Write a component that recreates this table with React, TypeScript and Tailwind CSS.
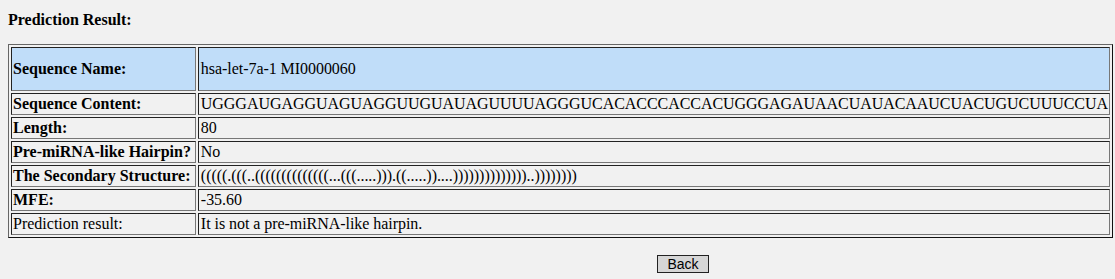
const rows: { label: string; value: string; bold: boolean }[] = [
  { label: 'Sequence Content:', value: 'UGGGAUGAGGUAGUAGGUUGUAUAGUUUUAGGGUCACACCCACCACUGGGAGAUAACUAUACAAUCUACUGUCUUUCCUA', bold: true },
  { label: 'Length:', value: '80', bold: true },
  { label: 'Pre-miRNA-like Hairpin?', value: 'No', bold: true },
  { label: 'The Secondary Structure:', value: '(((((.(((..((((((((((((((...(((.....))).((.....))....))))))))))))))..))))))))', bold: true },
  { label: 'MFE:', value: '-35.60', bold: true },
  { label: 'Prediction result:', value: 'It is not a pre-miRNA-like hairpin.', bold: false },
]

const cell = 'border border-t-[#222] border-l-[#222] border-b-[#777] border-r-[#777] py-px text-left align-middle'
const labelCell = cell + ' w-[185px] pl-px pr-[3px] whitespace-nowrap'
const valueCell = cell + ' pl-[2px] pr-px whitespace-nowrap tracking-[-0.05px]'

export default function App() {
  return (
    <div className="min-h-[279px] bg-[#f1f1f1] px-2 pt-[11px] text-black" style={{ fontFamily: '"Liberation Serif", "Times New Roman", serif' }}>
      <div className="text-[16px] font-bold leading-[17px]">Prediction Result:</div>

      <table className="mt-4 w-[1105px] border-separate border-spacing-[2px] border border-t-[#666] border-l-[#666] border-b-[#111] border-r-[#111] text-[16px] leading-[18px]">
        <tbody>
          <tr className="bg-[#c0ddf9]">
            <th className={labelCell + ' h-[44px] font-bold'}>Sequence Name:</th>
            <td className={valueCell}>hsa-let-7a-1 MI0000060</td>
          </tr>
          {rows.map((r) => (
            <tr key={r.label}>
              <th className={labelCell + ' ' + (r.bold ? 'font-bold' : 'font-normal')}>{r.label}</th>
              <td className={valueCell}>{r.value}</td>
            </tr>
          ))}
        </tbody>
      </table>

      <div className="mt-[17px] flex">
        <button
          className="ml-[649px] h-[18px] w-[52px] border border-[#222] bg-[#d6d6d6] text-[14px] leading-none"
          style={{ fontFamily: '"Liberation Sans", Arial, sans-serif' }}
        >
          Back
        </button>
      </div>
    </div>
  )
}
